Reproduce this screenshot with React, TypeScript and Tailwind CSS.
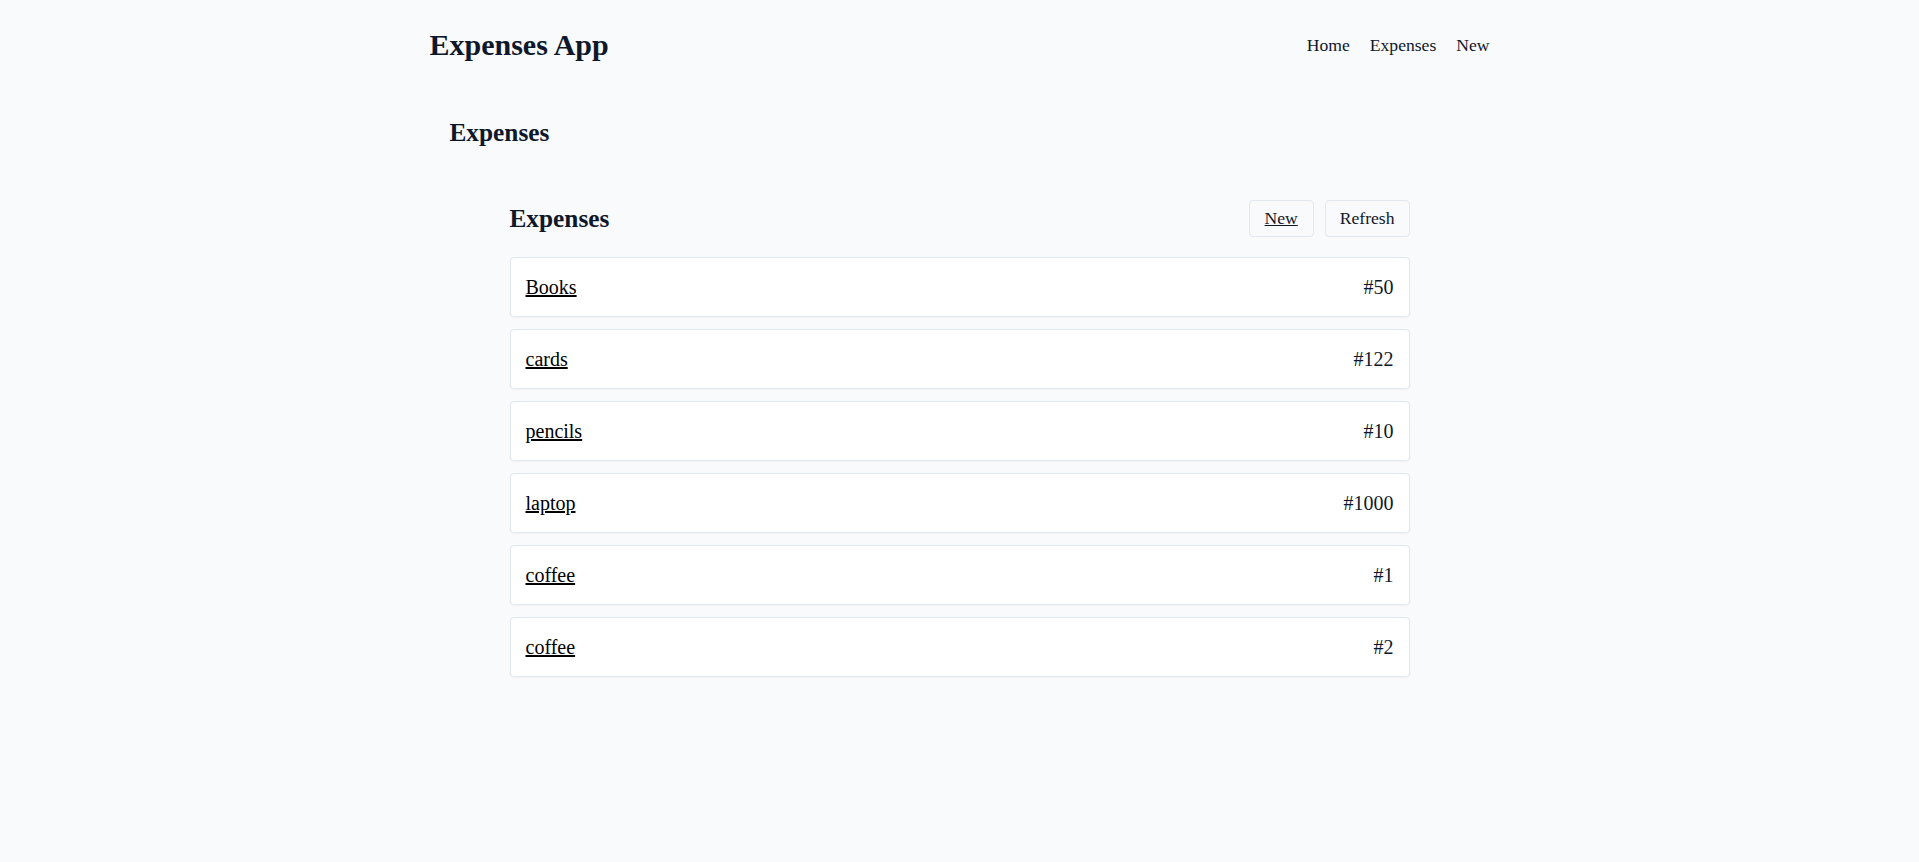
const expenses = [
  { id: 1, name: "Books", amount: 50 },
  { id: 2, name: "cards", amount: 122 },
  { id: 3, name: "pencils", amount: 10 },
  { id: 4, name: "laptop", amount: 1000 },
  { id: 5, name: "coffee", amount: 1 },
  { id: 6, name: "coffee", amount: 2 },
]

export default function App() {
  return (
    <div className="min-h-[862px] bg-[#f8fafc] text-[#0f172a] font-['Liberation_Serif','Times_New_Roman',serif]">
      <div className="mx-auto w-[1060px]">
        <header className="flex items-center justify-between pt-[27px]">
          <h1 className="text-[30px] leading-[36px] font-bold">Expenses App</h1>
          <nav className="flex items-center gap-[20px] text-[17.6px]">
            <a href="#">Home</a>
            <a href="#">Expenses</a>
            <a href="#">New</a>
          </nav>
        </header>

        <main className="pt-[53px]">
          <h2 className="pl-[20px] text-[25.3px] leading-[33px] font-bold">Expenses</h2>

          <section className="px-[80px] pt-[51px]">
            <div className="flex items-center justify-between">
              <h3 className="text-[25.3px] leading-[33px] font-bold">Expenses</h3>
              <div className="flex items-center gap-[11px] text-[17.6px]">
                <a
                  href="#"
                  className="flex h-[37px] items-center rounded border border-[#e2e8f0] bg-[#f8fafc] px-[15px] underline"
                >
                  New
                </a>
                <button className="flex h-[37px] items-center rounded border border-[#e2e8f0] bg-[#f8fafc] px-[14px]">
                  Refresh
                </button>
              </div>
            </div>

            <ul className="mt-[20px] flex flex-col gap-[12px]">
              {expenses.map((e) => (
                <li
                  key={e.id}
                  className="flex h-[60px] items-center justify-between rounded border border-[#e2e8f0] bg-white px-[15px] text-[20px] shadow-[0_1px_2px_rgba(15,23,42,0.04)]"
                >
                  <a href="#" className="text-black underline">
                    {e.name}
                  </a>
                  <span>#{e.amount}</span>
                </li>
              ))}
            </ul>
          </section>
        </main>
      </div>
    </div>
  )
}
